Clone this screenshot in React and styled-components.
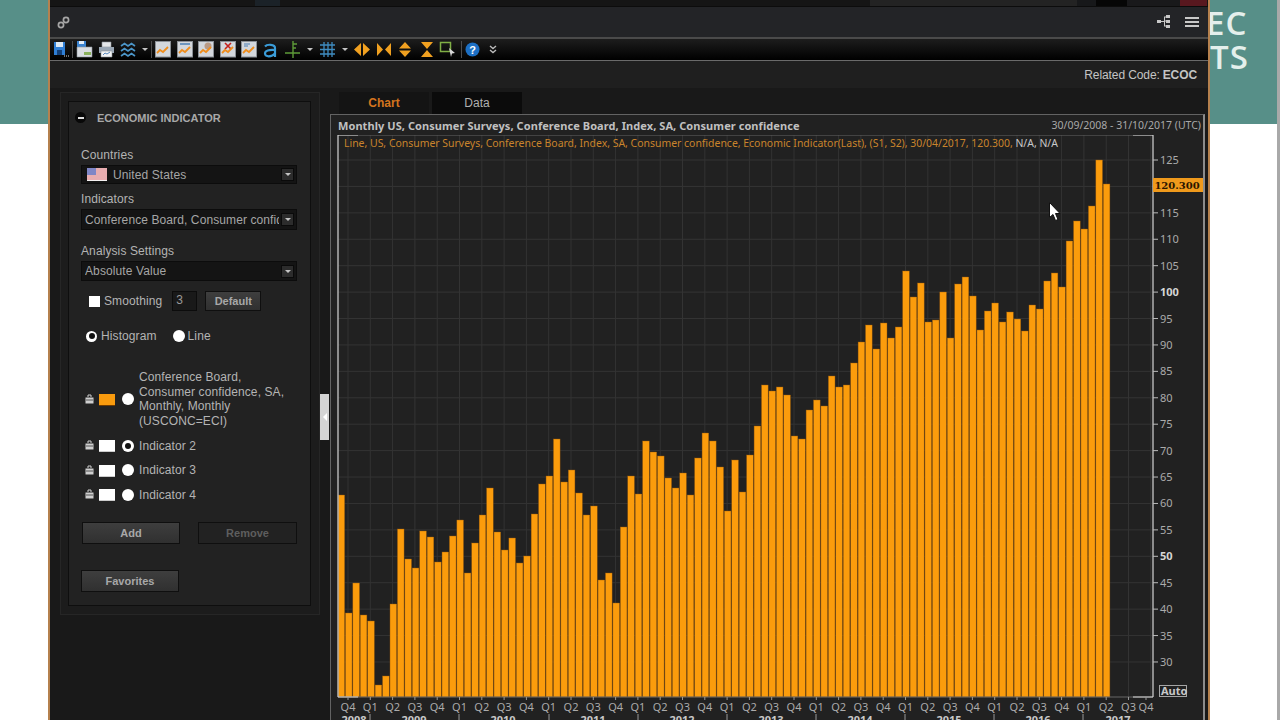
import React from 'react';
import styled, { createGlobalStyle } from 'styled-components';

const GlobalStyle = createGlobalStyle`
  html, body {
    margin: 0;
    height: 720px;
    overflow: hidden;
    background: #fff;
    font-family: "Liberation Sans", Arial, sans-serif;
  }
`;

// bar tops in page pixels, read off the chart
const barTops = [
  495, 613, 583, 615, 621, 685, 676, 604, 529, 559, 568, 531, 537, 562, 552, 536, 520, 573, 543, 515, 488,
  532, 550, 538, 563, 556, 514, 484, 476, 439, 482, 470, 493, 515, 506, 580, 573, 603, 527, 476, 494, 441,
  452, 456, 478, 488, 473, 495, 458, 433, 441, 467, 511, 460, 492, 455, 426, 385, 391, 387, 395, 436, 439,
  410, 400, 406, 376, 387, 385, 363, 342, 325, 349, 323, 338, 327, 271, 297, 283, 322, 320, 292, 338, 284,
  277, 296, 330, 311, 303, 322, 312, 319, 331, 305, 309, 281, 273, 287, 241, 221, 229, 206, 160, 184,
];
const quarters = ['Q4', 'Q1', 'Q2', 'Q3'];
const years = [
  ['2008', 354], ['2009', 414], ['2010', 503], ['2011', 593], ['2012', 682],
  ['2013', 771], ['2014', 860], ['2015', 949], ['2016', 1038], ['2017', 1118],
];
const yearMarks = [370, 459, 549, 638, 727, 816, 905, 994, 1083];
const yTicks = [125, 120, 115, 110, 105, 100, 95, 90, 85, 80, 75, 70, 65, 60, 55, 50, 45, 40, 35, 30];
const yOf = (v) => 160 + (125 - v) * 5.284;

const Page = styled.div`
  display: flex;
  width: 1280px;
  height: 720px;
  overflow: hidden;
`;
const LeftGutter = styled.div`
  width: 48px;
  flex: none;
`;
const TealBlock = styled.div`
  height: 124px;
  background: #578f88;
`;
const RightGutter = styled.div`
  flex: 1;
  display: flex;
  flex-direction: column;
  overflow: hidden;
  border-right: 3px solid #a9a9a9;
`;
const BrandBlock = styled(TealBlock)`
  color: #e4efec;
  font-family: "Open Sans", sans-serif;
  font-weight: 600;
  font-size: 33px;
  line-height: 34px;
  letter-spacing: 1px;
  padding-top: 6px;
  box-sizing: border-box;
  overflow: hidden;
  white-space: nowrap;
`;
const BrandLine = styled.div`
  margin-left: ${(p) => p.$shift}px;
`;
const Window = styled.div`
  width: 1162px;
  flex: none;
  height: 720px;
  box-sizing: border-box;
  border-left: 2px solid #b5814e;
  border-right: 2px solid #b5814e;
  background: #191919;
  display: flex;
  flex-direction: column;
  overflow: hidden;
`;
const TopStrip = styled.div`
  display: flex;
  height: 6px;
  flex: none;
  background: #141414;
`;
const StripPart = styled.div`
  width: ${(p) => p.$w}px;
  background: ${(p) => p.$c};
`;
const NavBar = styled.div`
  height: 31px;
  flex: none;
  display: flex;
  align-items: center;
  background: #232427;
  border-top: 1px solid #0c0c0c;
  box-sizing: border-box;
`;
const NavLeft = styled.div`
  width: 27px;
  display: flex;
  justify-content: center;
`;
const NavRight = styled.div`
  margin-left: auto;
  display: flex;
  align-items: center;
  gap: 14px;
  padding-right: 9px;
`;
const ToolBar = styled.div`
  height: 24px;
  flex: none;
  box-sizing: border-box;
  display: flex;
  align-items: center;
  background: linear-gradient(#1d1d1d, #000);
  border-top: 2px solid #4a4a4a;
  border-bottom: 1px solid #6a6a6a;
`;
const ToolSlot = styled.div`
  width: ${(p) => p.$w || 21.5}px;
  flex: none;
  display: flex;
  justify-content: center;
  align-items: center;
`;
const ToolSep = styled.div`
  width: 1px;
  height: 17px;
  margin: 0 ${(p) => p.$m || 1}px;
  background: #4c4c4c;
  flex: none;
`;
const Caret = styled.span`
  width: 0;
  height: 0;
  border-left: 3px solid transparent;
  border-right: 3px solid transparent;
  border-top: 3px solid #c4c4c4;
`;
const RelatedRow = styled.div`
  height: 27px;
  flex: none;
  display: flex;
  justify-content: flex-end;
  align-items: center;
  padding-right: 11px;
  background: #1f1f1f;
  color: #c4c4c4;
  font-size: 12px;
  letter-spacing: -0.1px;
`;
const RelatedCode = styled.b`
  margin-left: 3px;
`;
const Content = styled.div`
  flex: 1;
  display: flex;
  padding: 4px 0 0 10px;
  min-height: 0;
`;
const OuterPanel = styled.div`
  width: 260px;
  height: 523px;
  box-sizing: border-box;
  padding: 8px 8px 8px 7px;
  background: #1c1c1c;
  border: 1px solid #262626;
  flex: none;
`;
const InnerPanel = styled.div`
  height: 100%;
  box-sizing: border-box;
  background: #222;
  border: 1px solid #0e0e0e;
  padding: 0 13px 0 12px;
  color: #b4b4b4;
  font-size: 12px;
  letter-spacing: 0.1px;
`;
const PanelHead = styled.div`
  height: 31px;
  display: flex;
  align-items: center;
  gap: 11px;
  font-size: 11px;
  font-weight: bold;
  letter-spacing: 0;
  color: #a8a8a8;
  margin-left: -6px;
`;
const Collapse = styled.span`
  width: 11px;
  height: 11px;
  border-radius: 50%;
  background: #080808;
  display: flex;
  align-items: center;
  justify-content: center;
  &::before {
    content: '';
    width: 6px;
    height: 2px;
    background: #ddd;
  }
`;
const FieldLabel = styled.div`
  line-height: 14px;
  margin-top: ${(p) => p.$top}px;
`;
const Select = styled.div`
  height: ${(p) => p.$h}px;
  margin-top: 3px;
  display: flex;
  align-items: center;
  gap: 2px;
  padding: 0 2px 0 3px;
  background: #141414;
  border: 1px solid #0c0c0c;
  box-sizing: border-box;
  color: #a6a6a6;
  white-space: nowrap;
`;
const SelectText = styled.span`
  flex: 1;
  overflow: hidden;
`;
const SelectArrow = styled.span`
  width: 13px;
  height: 13px;
  flex: none;
  background: #2c2c2c;
  border: 1px solid #0a0a0a;
  box-sizing: border-box;
  display: flex;
  align-items: center;
  justify-content: center;
`;
const OptionRow = styled.div`
  height: 20px;
  display: flex;
  align-items: center;
  margin-top: ${(p) => p.$top}px;
  padding-left: ${(p) => p.$left}px;
`;
const Check = styled.span`
  width: 11px;
  height: 11px;
  background: #fff;
  margin-right: 4px;
  flex: none;
`;
const SmoothInput = styled.span`
  width: 25px;
  height: 20px;
  box-sizing: border-box;
  margin-left: 10px;
  padding-left: 3px;
  background: #191919;
  border: 1px solid #0c0c0c;
  line-height: 16px;
  color: #9a9a9a;
`;
const Button = styled.div`
  width: ${(p) => p.$w}px;
  height: ${(p) => p.$h}px;
  margin-left: ${(p) => p.$left || 0}px;
  box-sizing: border-box;
  display: flex;
  align-items: center;
  justify-content: center;
  font-size: 11px;
  font-weight: bold;
  letter-spacing: 0;
  background: ${(p) => (p.$off ? '#222' : 'linear-gradient(#3e3e3e, #303030)')};
  color: ${(p) => (p.$off ? '#5e5e5e' : '#a8a8a8')};
  border: 1px solid #0f0f0f;
`;
const Radio = styled.span`
  width: ${(p) => p.$size || 11}px;
  height: ${(p) => p.$size || 11}px;
  border-radius: 50%;
  background: #fff;
  flex: none;
  margin-right: ${(p) => p.$gap}px;
  margin-left: ${(p) => p.$left || 0}px;
  display: flex;
  align-items: center;
  justify-content: center;
  &::before {
    content: '';
    display: ${(p) => (p.$on ? 'block' : 'none')};
    width: 6px;
    height: 6px;
    border-radius: 50%;
    background: #111;
  }
`;
const IndicatorList = styled.div`
  margin-top: 24px;
  display: flex;
  flex-direction: column;
  gap: 4.5px;
`;
const IndicatorRow = styled.div`
  display: flex;
  align-items: center;
  min-height: 20px;
  padding-left: 4px;
  margin-bottom: ${(p) => p.$after || 0}px;
`;
const Swatch = styled.span`
  width: 16px;
  height: 11px;
  margin: 1px 7px 0 5px;
  flex: none;
  background: ${(p) => p.$c};
  border-bottom: 1px solid ${(p) => (p.$c === '#fff' ? '#ccc' : '#6e3a00')};
`;
const IndicatorText = styled.div`
  width: 150px;
  line-height: 14.6px;
  margin-left: 5px;
`;
const ButtonRow = styled.div`
  display: flex;
  margin-top: ${(p) => p.$top}px;
  margin-left: ${(p) => p.$left || 0}px;
`;
const Splitter = styled.div`
  width: 9px;
  height: 46px;
  margin-top: 302px;
  flex: none;
  background: #d4d4d4;
  display: flex;
  align-items: center;
  justify-content: center;
  &::before {
    content: '';
    border-top: 4px solid transparent;
    border-bottom: 4px solid transparent;
    border-right: 4px solid #fff;
  }
`;
const ChartColumn = styled.div`
  flex: 1;
  margin-left: 1px;
  display: flex;
  flex-direction: column;
  min-width: 0;
`;
const Tabs = styled.div`
  display: flex;
  height: 22px;
  flex: none;
  gap: 3px;
  padding-left: 9px;
`;
const Tab = styled.div`
  width: 90px;
  display: flex;
  align-items: center;
  justify-content: center;
  font-size: 12px;
  font-weight: ${(p) => (p.$active ? 'bold' : 'normal')};
  color: ${(p) => (p.$active ? '#d5741e' : '#b0b0b0')};
  background: ${(p) => (p.$active ? '#141414' : '#0b0b0b')};
`;
const ChartPanel = styled.div`
  flex: 1;
  margin-right: 3px;
  background: #212121;
  border-top: 1px solid #636363;
  border-left: 1px solid #636363;
  border-right: 2px solid #8c8c8c;
  display: flex;
  flex-direction: column;
  min-height: 0;
`;
const ChartHead = styled.div`
  height: 20px;
  flex: none;
  display: flex;
  justify-content: space-between;
  align-items: center;
  padding: 0 2px 0 7px;
  font-family: "Noto Sans", sans-serif;
  font-size: 11px;
  color: #c0c0c0;
`;
const ChartTitle = styled.span`
  font-weight: 700;
  letter-spacing: 0.07px;
`;
const ChartRange = styled.span`
  font-size: 10.5px;
  color: #a8a8a8;
`;
const ChartSvg = styled.svg`
  display: block;
  flex: 1;
  width: 100%;
  min-height: 0;
  font-family: "Noto Sans", sans-serif;
  font-size: 11px;
`;
const LineLabel = styled.text`
  font-size: 10.45px;
  fill: #c9842c;
`;

const Thumb = ({ children }) => (
  <svg width="16" height="17" viewBox="0 0 16 17">
    <rect x="0.5" y="0.5" width="15" height="15.5" fill="#d3d7dc" stroke="#8b9096" />
    {children}
    <path d="M2 12l3-3 3 2 5-5" fill="none" stroke="#ef8d1c" strokeWidth="1.8" />
  </svg>
);

const SaveIcon = () => (
  <svg width="16" height="17" viewBox="0 0 16 17">
    <path d="M1 1h11v13H1z" fill="#2f7fd6" />
    <path d="M3 1h7v5H3z" fill="#dce9f6" />
    <path d="M4 9h5v5H4z" fill="#123f78" />
    <path d="M11 15h1M13 15h1M15 15h1" stroke="#ddd" />
  </svg>
);
const SaveChartIcon = () => (
  <svg width="17" height="17" viewBox="0 0 17 17">
    <path d="M1 0h9v8H1z" fill="#3b83d0" />
    <path d="M3 0h5v3H3z" fill="#e4eef8" />
    <path d="M1 6h15v10H1z" fill="#d9dde2" stroke="#8c9298" strokeWidth="0.6" />
    <path d="M8 11h7v3H8z" fill="#8ab15d" />
  </svg>
);
const PrintIcon = () => (
  <svg width="17" height="17" viewBox="0 0 17 17">
    <path d="M4 1h9v5H4z" fill="#e5e7ea" stroke="#8f959b" strokeWidth="0.6" />
    <path d="M1 6h15v6H1z" fill="#9aa7b5" />
    <path d="M3 10h11v6H3z" fill="#f3f4f5" stroke="#8f959b" strokeWidth="0.6" />
    <path d="M5 14l2-2 2 1 3-2" fill="none" stroke="#5a8abf" />
  </svg>
);
const WavesIcon = () => (
  <svg width="16" height="16" viewBox="0 0 16 16" fill="none" stroke="#4b95c8" strokeWidth="1.7">
    <path d="M1 4l3.5-2.5L8 4l3.5-2.5L15 4" />
    <path d="M1 9l3.5-2.5L8 9l3.5-2.5L15 9" />
    <path d="M1 14l3.5-2.5L8 14l3.5-2.5L15 14" />
  </svg>
);
const CrossIcon = () => (
  <svg width="17" height="17" viewBox="0 0 17 17" fill="none">
    <path d="M9 0v17M1 12h15" stroke="#5e9a38" strokeWidth="1.4" />
    <path d="M9 3h4M9 7h3" stroke="#5e9a38" strokeWidth="1.4" />
  </svg>
);
const GridIcon = () => (
  <svg width="15" height="15" viewBox="0 0 15 15" stroke="#3f8cc0" strokeWidth="1.3">
    <path d="M4 0v15M8 0v15M12 0v15M0 3h15M0 7.5h15M0 12h15" />
  </svg>
);
const ArrowIcon = ({ d }) => (
  <svg width="16" height="15" viewBox="0 0 16 15" fill="#f0a020">
    <path d={d} />
  </svg>
);
const FrameIcon = () => (
  <svg width="17" height="17" viewBox="0 0 17 17" fill="none">
    <path d="M1.5 1.5h10v9h-10z" stroke="#7fae45" strokeWidth="1.5" />
    <path d="M10 7l6 5-3 .5L12 16z" fill="#d8d8d8" />
  </svg>
);
const HelpIcon = () => (
  <svg width="15" height="15" viewBox="0 0 15 15">
    <circle cx="7.5" cy="7.5" r="7" fill="#1c6fc4" />
    <text x="7.5" y="11.5" textAnchor="middle" fill="#fff" fontSize="11" fontWeight="bold" fontFamily="Liberation Sans">?</text>
  </svg>
);
const MoreIcon = () => (
  <svg width="8" height="9" viewBox="0 0 8 9" fill="none" stroke="#bbb" strokeWidth="1.4">
    <path d="M1 1l3 2.5L7 1M1 5l3 2.5L7 5" />
  </svg>
);
const LinkIcon = () => (
  <svg width="13" height="13" viewBox="0 0 13 13" fill="none" stroke="#a6a6a6" strokeWidth="1.7">
    <circle cx="4" cy="9" r="2.6" />
    <circle cx="9" cy="4" r="2.6" />
  </svg>
);
const TreeIcon = () => (
  <svg width="14" height="14" viewBox="0 0 14 14" fill="#c8c8c8">
    <path d="M0 5h4v3H0zM9 0h4v3H9zM9 5h4v3H9zM9 10h4v3H9z" />
    <path d="M4 6h3v-4.500h2v1H8v3h1v1H8v4h1v1H7V7H4z" />
  </svg>
);
const MenuIcon = () => (
  <svg width="14" height="12" viewBox="0 0 14 12" fill="#c8c8c8">
    <path d="M0 1h14v2H0zM0 5h14v2H0zM0 9h14v2H0z" />
  </svg>
);
const LockIcon = () => (
  <svg width="9" height="11" viewBox="0 0 9 11" style={{ flex: 'none' }}>
    <path d="M3 3V1h3v2" fill="none" stroke="#cfcfcf" />
    <path d="M0.500 3.500h8v6h-8z" fill="#cfcfcf" />
    <path d="M1 6h7" stroke="#555" />
  </svg>
);
const FlagSvg = styled.svg`
  flex: none;
  margin: 0 4px 0 2px;
`;
const FlagIcon = () => (
  <FlagSvg width="20" height="13" viewBox="0 0 20 13">
    <rect width="20" height="13" fill="#f4f0f0" />
    <path d="M0 1h20M0 3h20M0 5h20M0 7h20M0 9h20M0 11h20" stroke="#dc6a70" />
    <rect width="9" height="7" fill="#7f86c6" />
  </FlagSvg>
);

const Chart = () => (
  <ChartSvg viewBox="331 135 872 585" preserveAspectRatio="xMinYMin slice">
    {yTicks.map((v) => (
      <line key={v} x1="338" x2="1153" y1={yOf(v)} y2={yOf(v)} stroke="#343434" />
    ))}
    {Array.from({ length: 37 }, (_, i) => (
      <line key={i} x1={348 + i * 22.3} x2={348 + i * 22.3} y1="135" y2="697" stroke="#333" />
    ))}
    {barTops.map((top, i) => (
      <rect
        key={i}
        x={338 + i * 7.43}
        y={top}
        width="6.6"
        height={697 - top}
        fill="#fb9c0c"
        stroke="#9a5a0c"
        strokeWidth="0.4"
      />
    ))}
    <path d="M338 135H1153V697H338Z" fill="none" stroke="#666" />
    <path d="M338 697V135H358M1133 135H1153V697H1133M338 697H358" fill="none" stroke="#d8d8d8" />
    <LineLabel x="344" y="147">
      Line, US, Consumer Surveys, Conference Board, Index, SA, Consumer confidence, Economic Indicator(Last), (S1, S2), 30/04/2017, 120.300,
      <tspan fill="#c8c8c8"> N/A, N/A</tspan>
    </LineLabel>
    {yTicks.filter((v) => v !== 120).map((v) => (
      <g key={v}>
        <line x1="1153" x2="1158" y1={yOf(v)} y2={yOf(v)} stroke="#bbb" />
        <text
          x="1160"
          y={yOf(v) + 4}
          fill={v % 50 === 0 ? '#d6d6d6' : '#ababab'}
          fontWeight={v % 50 === 0 ? 700 : 400}
        >
          {v}
        </text>
      </g>
    ))}
    <rect x="1153" y="178" width="50" height="14" fill="#f09a1c" />
    <text x="1177" y="189" textAnchor="middle" fill="#2a1600" fontWeight="700" fontSize="10" fontFamily="DejaVu Serif">120.300</text>
    <rect x="1159.500" y="685.500" width="27" height="11" fill="none" stroke="#a5a5a5" />
    <text x="1161" y="695" fill="#c8c8c8" fontWeight="700">Auto</text>
    {Array.from({ length: 37 }, (_, i) => {
      const x = i === 36 ? 1146 : 348 + i * 22.3;
      return (
        <g key={i}>
          <line x1={x} x2={x} y1="697" y2="700" stroke="#999" />
          <text x={x} y="711" textAnchor="middle" fill="#ababab">{quarters[i % 4]}</text>
        </g>
      );
    })}
    {yearMarks.map((x) => (
      <line key={x} x1={x} x2={x} y1="714" y2="720" stroke="#999" />
    ))}
    {years.map(([y, x]) => (
      <text key={y} x={x} y="724" textAnchor="middle" fill="#c8c8c8" fontWeight="700">{y}</text>
    ))}
    <path d="M1049.500 202.500v15l3.500-3 2.500 6 2.500-1-2.500-6h4.500z" fill="#fff" stroke="#111" />
  </ChartSvg>
);

export default function App() {
  return (
    <Page>
      <GlobalStyle />
      <LeftGutter>
        <TealBlock />
      </LeftGutter>
      <Window>
        <TopStrip>
          <StripPart $w={205} $c="#151515" />
          <StripPart $w={25} $c="#1b2228" />
          <StripPart $w={590} $c="#151515" />
          <StripPart $w={207} $c="#232323" />
          <StripPart $w={19} $c="#17181a" />
          <StripPart $w={31} $c="#060606" />
          <StripPart $w={53} $c="#19191b" />
          <StripPart $w={27} $c="#58181f" />
        </TopStrip>
        <NavBar>
          <NavLeft>
            <LinkIcon />
          </NavLeft>
          <NavRight>
            <TreeIcon />
            <MenuIcon />
          </NavRight>
        </NavBar>
        <ToolBar>
          <ToolSlot $w={21}><SaveIcon /></ToolSlot>
          <ToolSep />
          <ToolSlot><SaveChartIcon /></ToolSlot>
          <ToolSlot><PrintIcon /></ToolSlot>
          <ToolSlot><WavesIcon /></ToolSlot>
          <ToolSlot $w={12}><Caret /></ToolSlot>
          <ToolSep $m={0.5} />
          <ToolSlot><Thumb /></ToolSlot>
          <ToolSlot><Thumb><path d="M3 3h10" stroke="#4b7fb5" strokeWidth="1.5" /></Thumb></ToolSlot>
          <ToolSlot><Thumb><circle cx="10" cy="5" r="3.500" fill="#b99a85" /></Thumb></ToolSlot>
          <ToolSlot><Thumb><path d="M5 2l6 6M11 2l-6 6" stroke="#c4201c" strokeWidth="1.6" /></Thumb></ToolSlot>
          <ToolSlot><Thumb><path d="M3 3h6M3 5h4" stroke="#4b7fb5" /></Thumb></ToolSlot>
          <ToolSlot>
            <svg width="18" height="20" viewBox="0 0 18 20" fill="none" stroke="#3a9cd8" strokeWidth="2.200">
              <path d="M3 6.500c2-2.500 10-2.500 10 1.500v9M13 10c-6-.5-10 .5-10 3.500 0 4 7 3.500 10 0" />
            </svg>
          </ToolSlot>
          <ToolSlot><CrossIcon /></ToolSlot>
          <ToolSlot $w={14}><Caret /></ToolSlot>
          <ToolSlot><GridIcon /></ToolSlot>
          <ToolSlot $w={13}><Caret /></ToolSlot>
          <ToolSlot><ArrowIcon d="M0 7.500L7 1v13zM9 1l7 6.500L9 14z" /></ToolSlot>
          <ToolSlot><ArrowIcon d="M1 1l6 6.500L1 14zM15 1L9 7.500l6 6.500z" /></ToolSlot>
          <ToolSlot><ArrowIcon d="M8 0l6 6.500H2zM2 8.500h12L8 15z" /></ToolSlot>
          <ToolSlot><ArrowIcon d="M2 0h12L8 7zM8 8l6 7H2z" /></ToolSlot>
          <ToolSlot $w={20}><FrameIcon /></ToolSlot>
          <ToolSep $m={3} />
          <ToolSlot $w={16}><HelpIcon /></ToolSlot>
          <ToolSlot $w={25}><MoreIcon /></ToolSlot>
        </ToolBar>
        <RelatedRow>
          Related Code:<RelatedCode>ECOC</RelatedCode>
        </RelatedRow>
        <Content>
          <OuterPanel>
            <InnerPanel>
              <PanelHead>
                <Collapse />
                ECONOMIC INDICATOR
              </PanelHead>
              <FieldLabel $top={15}>Countries</FieldLabel>
              <Select $h={19}>
                <FlagIcon />
                <SelectText>United States</SelectText>
                <SelectArrow><Caret /></SelectArrow>
              </Select>
              <FieldLabel $top={8}>Indicators</FieldLabel>
              <Select $h={21}>
                <SelectText>Conference Board, Consumer confidence, SA</SelectText>
                <SelectArrow><Caret /></SelectArrow>
              </Select>
              <FieldLabel $top={14}>Analysis Settings</FieldLabel>
              <Select $h={20}>
                <SelectText>Absolute Value</SelectText>
                <SelectArrow><Caret /></SelectArrow>
              </Select>
              <OptionRow $top={10} $left={8}>
                <Check />
                Smoothing
                <SmoothInput>3</SmoothInput>
                <Button $w={56} $h={20} $left={8}>Default</Button>
              </OptionRow>
              <OptionRow $top={15} $left={5}>
                <Radio $on $gap={4} />
                Histogram
                <Radio $size={12} $gap={3} $left={16} />
                Line
              </OptionRow>
              <IndicatorList>
                <IndicatorRow $after={3}>
                  <LockIcon />
                  <Swatch $c="#f99b0e" />
                  <Radio $size={12} $gap={0} />
                  <IndicatorText>Conference Board, Consumer confidence, SA, Monthly, Monthly (USCONC=ECI)</IndicatorText>
                </IndicatorRow>
                {[2, 3, 4].map((n) => (
                  <IndicatorRow key={n}>
                    <LockIcon />
                    <Swatch $c="#fff" />
                    <Radio $size={12} $gap={0} $on={n === 2} />
                    <IndicatorText>Indicator {n}</IndicatorText>
                  </IndicatorRow>
                ))}
              </IndicatorList>
              <ButtonRow $top={17} $left={1}>
                <Button $w={98} $h={22}>Add</Button>
                <Button $w={99} $h={22} $left={18} $off>Remove</Button>
              </ButtonRow>
              <ButtonRow $top={26}>
                <Button $w={98} $h={22}>Favorites</Button>
              </ButtonRow>
            </InnerPanel>
          </OuterPanel>
          <Splitter />
          <ChartColumn>
            <Tabs>
              <Tab $active>Chart</Tab>
              <Tab>Data</Tab>
            </Tabs>
            <ChartPanel>
              <ChartHead>
                <ChartTitle>Monthly US, Consumer Surveys, Conference Board, Index, SA, Consumer confidence</ChartTitle>
                <ChartRange>30/09/2008 - 31/10/2017 (UTC)</ChartRange>
              </ChartHead>
              <Chart />
            </ChartPanel>
          </ChartColumn>
        </Content>
      </Window>
      <RightGutter>
        <BrandBlock>
          <BrandLine $shift={-4}>EC</BrandLine>
          <BrandLine $shift={0}>TS</BrandLine>
        </BrandBlock>
      </RightGutter>
    </Page>
  );
}
